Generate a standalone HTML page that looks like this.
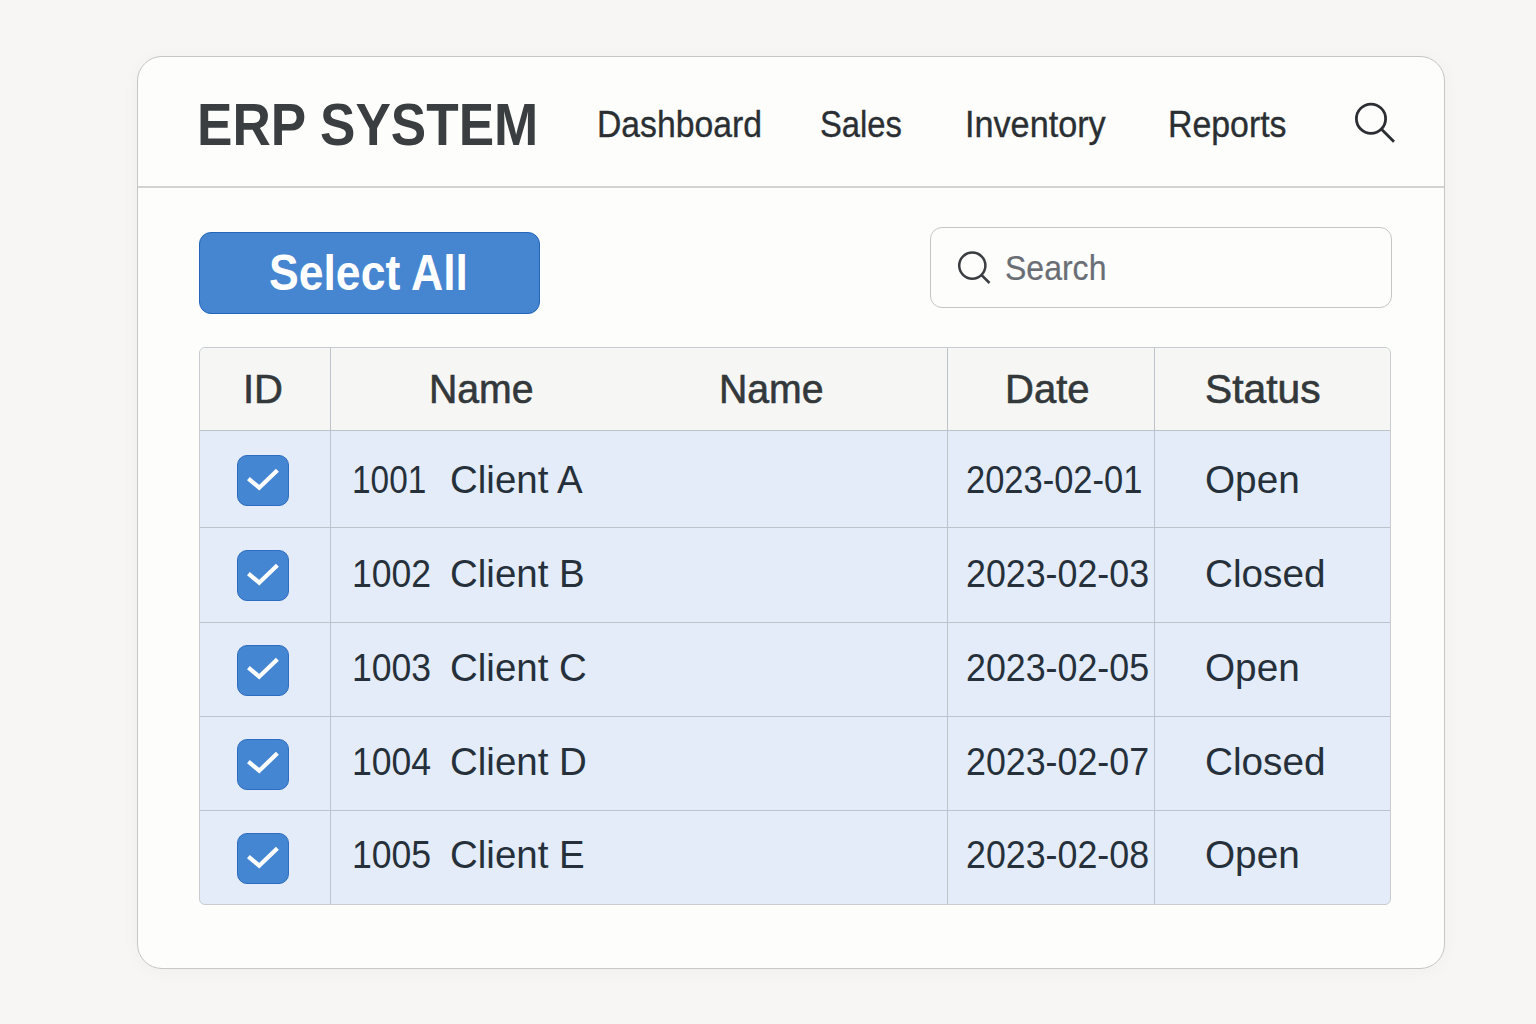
<!DOCTYPE html>
<html>
<head>
<meta charset="utf-8">
<style>
*{margin:0;padding:0;box-sizing:border-box;}
html,body{width:1536px;height:1024px;overflow:hidden;background:#f7f6f4;font-family:"Liberation Sans",sans-serif;}
.abs{position:absolute;}
.t{position:absolute;white-space:nowrap;line-height:1;transform-origin:0 0;}
#card{left:137px;top:56px;width:1308px;height:913px;border:1.5px solid #c6c6c4;border-radius:25px;background:#fdfdfb;box-shadow:0 2px 18px rgba(60,50,40,0.035);}
#hdiv{left:138px;top:186px;width:1306px;height:2px;background:#d3d3d1;}
#title{font-size:60px;font-weight:bold;color:#3a3e41;}
.nav{font-size:36px;color:#2a2f33;-webkit-text-stroke:0.35px #2a2f33;}
#btn{left:199px;top:232px;width:341px;height:82px;background:#4686d1;border:1.5px solid #2265b9;border-radius:12px;}
#btntxt{font-size:49.5px;font-weight:bold;color:#fff;}
#search{left:930px;top:227px;width:462px;height:81px;border:1.5px solid #c5c5c5;border-radius:12px;background:#fdfdfc;}
#stxt{font-size:34.8px;color:#696e75;-webkit-text-stroke:0.2px #696e75;}
#tbl{left:199px;top:347px;width:1192px;height:558px;border:1.5px solid #c8ccd1;border-radius:6px;background:#e3ecf8;overflow:hidden;}
#thead{left:0;top:0;width:100%;height:82px;background:#f6f6f4;}
.hl{position:absolute;left:0;width:100%;height:1px;background:#bcc3cb;}
.vl{position:absolute;top:0;height:100%;width:1px;background:#bcc3cb;}
.th{font-size:40px;color:#33383b;-webkit-text-stroke:0.6px #33383b;}
.td{font-size:39.5px;color:#26303a;}
.cb{position:absolute;left:237px;width:52px;height:51px;background:#4586d2;border:1.5px solid #2d6cc0;border-radius:10px;}
.cb svg{position:absolute;left:-1.5px;top:-1.5px;}
</style>
</head>
<body>
<div id="card" class="abs"></div>
<div id="hdiv" class="abs"></div>
<div class="t " id="title" style="left:196.50px;top:95.01px;transform:scaleX(0.8850);">ERP SYSTEM</div>
<div class="t nav" style="left:597.00px;top:106.63px;transform:scaleX(0.9370);">Dashboard</div>
<div class="t nav" style="left:820.00px;top:106.63px;transform:scaleX(0.9100);">Sales</div>
<div class="t nav" style="left:965.00px;top:106.63px;transform:scaleX(0.9500);">Inventory</div>
<div class="t nav" style="left:1167.50px;top:106.63px;transform:scaleX(0.9400);">Reports</div>
<svg class="abs" style="left:1340px;top:90px" width="70" height="70" viewBox="1340 90 70 70">
  <circle cx="1371" cy="118.7" r="14.6" fill="none" stroke="#2b2f33" stroke-width="2.8"/>
  <line x1="1381.5" y1="129.2" x2="1394" y2="141.7" stroke="#2b2f33" stroke-width="2.8" stroke-linecap="butt"/>
</svg>
<div id="btn" class="abs"></div>
<div class="t " id="btntxt" style="left:269.00px;top:248.20px;transform:scaleX(0.9000);">Select All</div>
<div id="search" class="abs"></div>
<svg class="abs" style="left:940px;top:240px" width="60" height="60" viewBox="940 240 60 60">
  <circle cx="972.3" cy="265.6" r="13.1" fill="none" stroke="#3a3d41" stroke-width="2.5"/>
  <line x1="981.5" y1="275" x2="989.5" y2="283" stroke="#3a3d41" stroke-width="2.5" stroke-linecap="butt"/>
</svg>
<div class="t " id="stxt" style="left:1005.00px;top:251.34px;transform:scaleX(0.9200);">Search</div>
<div id="tbl" class="abs">
  <div id="thead" class="abs"></div>
  <div class="hl" style="top:82px"></div>
  <div class="hl" style="top:179px"></div>
  <div class="hl" style="top:274px"></div>
  <div class="hl" style="top:368px"></div>
  <div class="hl" style="top:462px"></div>
  <div class="vl" style="left:130px"></div>
  <div class="vl" style="left:747px"></div>
  <div class="vl" style="left:954px"></div>
</div>
<div class="t th" style="left:243.00px;top:369.34px;">ID</div>
<div class="t th" style="left:428.50px;top:369.34px;transform:scaleX(0.9800);">Name</div>
<div class="t th" style="left:719.00px;top:369.34px;transform:scaleX(0.9800);">Name</div>
<div class="t th" style="left:1005.00px;top:369.34px;">Date</div>
<div class="t th" style="left:1205.00px;top:369.34px;transform:scaleX(1.0200);">Status</div>
<div class="cb" style="top:455px"><svg width="52" height="51"><polyline points="11.4,23.6 22.2,32.7 40.4,15.3" fill="none" stroke="#fff" stroke-width="4.2"/></svg></div>
<div class="cb" style="top:550px"><svg width="52" height="51"><polyline points="11.4,23.6 22.2,32.7 40.4,15.3" fill="none" stroke="#fff" stroke-width="4.2"/></svg></div>
<div class="cb" style="top:644.5px"><svg width="52" height="51"><polyline points="11.4,23.6 22.2,32.7 40.4,15.3" fill="none" stroke="#fff" stroke-width="4.2"/></svg></div>
<div class="cb" style="top:738.5px"><svg width="52" height="51"><polyline points="11.4,23.6 22.2,32.7 40.4,15.3" fill="none" stroke="#fff" stroke-width="4.2"/></svg></div>
<div class="cb" style="top:833px"><svg width="52" height="51"><polyline points="11.4,23.6 22.2,32.7 40.4,15.3" fill="none" stroke="#fff" stroke-width="4.2"/></svg></div>
<div class="t td" style="left:351.50px;top:459.96px;transform:scaleX(0.8450);">1001</div>
<div class="t td" style="left:450.00px;top:459.96px;transform:scaleX(0.9740);">Client A</div>
<div class="t td" style="left:965.50px;top:459.96px;transform:scaleX(0.8730);">2023-02-01</div>
<div class="t td" style="left:1204.50px;top:459.96px;transform:scaleX(0.9800);">Open</div>
<div class="t td" style="left:351.50px;top:553.86px;transform:scaleX(0.9000);">1002</div>
<div class="t td" style="left:450.00px;top:553.86px;transform:scaleX(0.9740);">Client B</div>
<div class="t td" style="left:965.50px;top:553.86px;transform:scaleX(0.9060);">2023-02-03</div>
<div class="t td" style="left:1204.50px;top:553.86px;transform:scaleX(0.9800);">Closed</div>
<div class="t td" style="left:351.50px;top:647.76px;transform:scaleX(0.9000);">1003</div>
<div class="t td" style="left:450.00px;top:647.76px;transform:scaleX(0.9740);">Client C</div>
<div class="t td" style="left:965.50px;top:647.76px;transform:scaleX(0.9060);">2023-02-05</div>
<div class="t td" style="left:1204.50px;top:647.76px;transform:scaleX(0.9800);">Open</div>
<div class="t td" style="left:351.50px;top:741.66px;transform:scaleX(0.9000);">1004</div>
<div class="t td" style="left:450.00px;top:741.66px;transform:scaleX(0.9740);">Client D</div>
<div class="t td" style="left:965.50px;top:741.66px;transform:scaleX(0.9060);">2023-02-07</div>
<div class="t td" style="left:1204.50px;top:741.66px;transform:scaleX(0.9800);">Closed</div>
<div class="t td" style="left:351.50px;top:835.46px;transform:scaleX(0.9000);">1005</div>
<div class="t td" style="left:450.00px;top:835.46px;transform:scaleX(0.9740);">Client E</div>
<div class="t td" style="left:965.50px;top:835.46px;transform:scaleX(0.9060);">2023-02-08</div>
<div class="t td" style="left:1204.50px;top:835.46px;transform:scaleX(0.9800);">Open</div>
</body>
</html>
